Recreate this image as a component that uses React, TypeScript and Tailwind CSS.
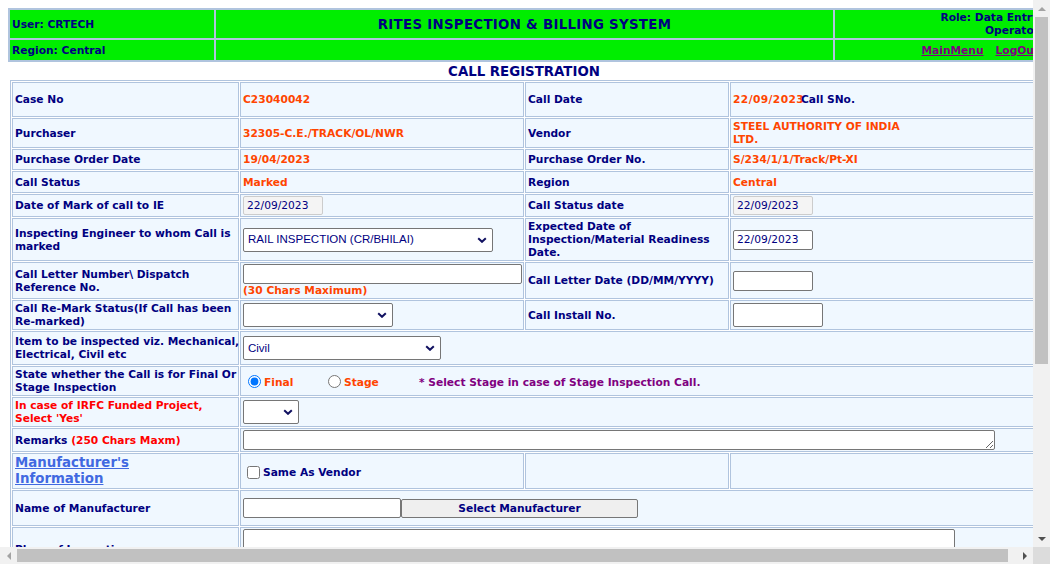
import React from 'react';

const cell = 'flex items-center border border-[#b0c4de] bg-[#f0f8ff] px-[2px]';
const box = 'rounded-[2px] border border-[#767676] bg-white px-[3px] font-normal text-[#000080] outline-none';
const roBox = 'rounded-[2px] border border-[#cccccc] bg-[#f4f4f4] px-[3px] font-normal text-[#000080] outline-none';

function Select({ className, value }: { className: string; value?: string }) {
  return (
    <div className={`relative h-[24px] ${className}`}>
      <select
        defaultValue={value ?? ''}
        className="h-full w-full appearance-none rounded-[2px] border border-[#767676] bg-white pl-[4px] font-['Liberation_Sans',Arial,sans-serif] text-[11.5px] font-normal text-[#000080] outline-none"
      >
        <option value={value ?? ''}>{value ?? ''}</option>
      </select>
      <svg className="pointer-events-none absolute right-[6px] top-[9px]" width="10" height="6" viewBox="0 0 10 6">
        <path d="M1.2 1.2L5 4.8L8.8 1.2" stroke="#101060" strokeWidth="2" fill="none" />
      </svg>
    </div>
  );
}

function Header() {
  return (
    <div className="grid w-max grid-cols-[204px_617px_206px] grid-rows-[28px_20px] gap-[2px] bg-[#b0c4de] p-[2px]">
      <div className="flex items-center bg-[#00ee00] px-[2px]">User: CRTECH</div>
      <div className="flex items-center justify-center bg-[#00ee00] text-[13.33px] tracking-[0.3px]">
        RITES INSPECTION &amp; BILLING SYSTEM
      </div>
      <div className="flex items-center justify-end bg-[#00ee00] px-[2px]">
        <div className="text-right">
          Role: Data Entry
          <br />
          Operator
        </div>
      </div>
      <div className="flex items-center bg-[#00ee00] px-[2px]">Region: Central</div>
      <div className="bg-[#00ee00]" />
      <div className="flex items-center justify-end bg-[#00ee00] px-[2px] text-[#800080]">
        <a className="underline">MainMenu</a>
        <a className="ml-[12px] underline">LogOut</a>
      </div>
    </div>
  );
}

function RegistrationForm() {
  return (
    <div className="ml-[2px] grid w-[1028px] grid-cols-[227px_284px_204px_305px] grid-rows-[35px_30px_21px_22px_23px_43px_37px_30px_34px_30px_30px_24px_36px_36px_45px] gap-[1px] border border-[#b0c4de] bg-white p-[1px] whitespace-nowrap">
      {/* case / call date */}
      <div className={cell}>Case No</div>
      <div className={`${cell} text-[#ff4500]`}>C23040042</div>
      <div className={cell}>Call Date</div>
      <div className={cell}>
        <span className="w-[68px] shrink-0 tracking-[0.4px] text-[#ff4500]">22/09/2023</span>
        <span>Call SNo.</span>
      </div>

      <div className={cell}>Purchaser</div>
      <div className={`${cell} text-[#ff4500]`}>32305-C.E./TRACK/OL/NWR</div>
      <div className={cell}>Vendor</div>
      <div className={`${cell} text-[#ff4500]`}>
        <div>
          STEEL AUTHORITY OF INDIA
          <br />
          LTD.
        </div>
      </div>

      <div className={cell}>Purchase Order Date</div>
      <div className={`${cell} text-[#ff4500]`}>19/04/2023</div>
      <div className={cell}>Purchase Order No.</div>
      <div className={`${cell} text-[#ff4500]`}>S/234/1/1/Track/Pt-XI</div>

      <div className={cell}>Call Status</div>
      <div className={`${cell} text-[#ff4500]`}>Marked</div>
      <div className={cell}>Region</div>
      <div className={`${cell} text-[#ff4500]`}>Central</div>

      <div className={cell}>Date of Mark of call to IE</div>
      <div className={cell}>
        <input readOnly value="22/09/2023" className={`h-[19px] w-[80px] ${roBox}`} />
      </div>
      <div className={cell}>Call Status date</div>
      <div className={cell}>
        <input readOnly value="22/09/2023" className={`h-[19px] w-[80px] ${roBox}`} />
      </div>

      <div className={cell}>
        <div>
          Inspecting Engineer to whom Call is
          <br />
          marked
        </div>
      </div>
      <div className={cell}>
        <Select className="w-[250px]" value="RAIL INSPECTION (CR/BHILAI)" />
      </div>
      <div className={cell}>
        <div>
          Expected Date of
          <br />
          Inspection/Material Readiness
          <br />
          Date.
        </div>
      </div>
      <div className={cell}>
        <input defaultValue="22/09/2023" className={`h-[20px] w-[80px] ${box}`} />
      </div>

      <div className={cell}>
        <div>
          {'Call Letter Number\\ Dispatch'}
          <br />
          Reference No.
        </div>
      </div>
      <div className="flex flex-col items-start border border-[#b0c4de] bg-[#f0f8ff] px-[2px] pt-[1px]">
        <input className={`h-[20px] w-[279px] ${box}`} />
        <span className="text-[#ff4500]">(30 Chars Maximum)</span>
      </div>
      <div className={cell}>Call Letter Date (DD/MM/YYYY)</div>
      <div className={cell}>
        <input className={`h-[20px] w-[80px] ${box}`} />
      </div>

      <div className={cell}>
        <div>
          Call Re-Mark Status(If Call has been
          <br />
          Re-marked)
        </div>
      </div>
      <div className={cell}>
        <Select className="w-[150px]" />
      </div>
      <div className={cell}>Call Install No.</div>
      <div className={cell}>
        <input className={`h-[24px] w-[90px] ${box}`} />
      </div>

      <div className={cell}>
        <div>
          Item to be inspected viz. Mechanical,
          <br />
          Electrical, Civil etc
        </div>
      </div>
      <div className={`${cell} col-span-3`}>
        <Select className="w-[198px]" value="Civil" />
      </div>

      <div className={cell}>
        <div>
          State whether the Call is for Final Or
          <br />
          Stage Inspection
        </div>
      </div>
      <div className={`${cell} col-span-3`}>
        <label className="flex w-[80px] items-center text-[#ff4500]">
          <input type="radio" name="calltype" defaultChecked className="ml-[5px] mr-[3px] h-[13px] w-[13px]" />
          <span className="mt-[2px]">Final</span>
        </label>
        <label className="flex w-[96px] items-center text-[#ff4500]">
          <input type="radio" name="calltype" className="ml-[5px] mr-[3px] h-[13px] w-[13px]" />
          <span className="mt-[2px]">Stage</span>
        </label>
        <span className="mt-[3px] text-[#800080]">* Select Stage in case of Stage Inspection Call.</span>
      </div>

      <div className={`${cell} text-[#ff0000]`}>
        <div>
          In case of IRFC Funded Project,
          <br />
          Select 'Yes'
        </div>
      </div>
      <div className={`${cell} col-span-3`}>
        <Select className="w-[56px]" />
      </div>

      <div className={cell}>
        Remarks&nbsp;<span className="text-[#ff0000]">(250 Chars Maxm)</span>
      </div>
      <div className={`${cell} col-span-3`}>
        <textarea className={`block h-[20px] w-[752px] ${box}`} />
      </div>

      <div className={cell}>
        <a className="text-[13.33px] leading-[16px] text-[#4169e1] underline">
          Manufacturer's
          <br />
          Information
        </a>
      </div>
      <div className={cell}>
        <label className="mt-[2px] flex items-center">
          <input type="checkbox" className="ml-[4px] mr-[3px] h-[13px] w-[13px]" />
          Same As Vendor
        </label>
      </div>
      <div className={cell} />
      <div className={cell} />

      <div className={cell}>Name of Manufacturer</div>
      <div className={`${cell} col-span-3`}>
        <input className={`h-[20px] w-[158px] ${box}`} />
        <button className="h-[19px] w-[237px] rounded-[2px] border border-[#767676] bg-[#efefef] text-[#000080]">
          Select Manufacturer
        </button>
      </div>

      <div className={cell}>Place of Inspection</div>
      <div className="col-span-3 flex items-start border border-[#b0c4de] bg-[#f0f8ff] px-[2px] pt-[1px]">
        <textarea className={`block h-[40px] w-[712px] ${box}`} />
      </div>
    </div>
  );
}

function VScroll() {
  return (
    <div className="flex h-[547px] w-[17px] flex-col bg-[#f1f1f1]">
      <div className="flex h-[17px] items-center justify-center">
        <svg width="8" height="4" viewBox="0 0 8 4">
          <path d="M4 0L8 4H0z" fill="#a3a3a3" />
        </svg>
      </div>
      <div className="flex-1 px-[2px]">
        <div className="h-[347px] bg-[#c1c1c1]" />
      </div>
      <div className="flex h-[17px] items-center justify-center">
        <svg width="8" height="4" viewBox="0 0 8 4">
          <path d="M0 0H8L4 4z" fill="#505050" />
        </svg>
      </div>
    </div>
  );
}

function HScroll() {
  return (
    <div className="flex h-[17px] w-[1033px] bg-[#f1f1f1]">
      <div className="flex w-[17px] items-center justify-center">
        <svg width="4" height="8" viewBox="0 0 4 8">
          <path d="M0 4L4 0V8z" fill="#a3a3a3" />
        </svg>
      </div>
      <div className="flex-1 py-[2px]">
        <div className="h-full w-[991px] bg-[#c1c1c1]" />
      </div>
      <div className="flex w-[17px] items-center justify-center">
        <svg width="4" height="8" viewBox="0 0 4 8">
          <path d="M0 0L4 4L0 8z" fill="#505050" />
        </svg>
      </div>
    </div>
  );
}

export default function App() {
  return (
    <div className="flex h-[564px] w-[1050px] flex-col overflow-hidden bg-white font-['DejaVu_Sans',Verdana,sans-serif] text-[10.67px] leading-[13px] font-bold text-[#000080]">
      <div className="flex h-[547px]">
        <div className="h-[547px] w-[1033px] overflow-hidden">
          <div className="w-[1048px] p-[8px]">
            <Header />
            <div className="flex h-[18px] w-[1032px] items-center justify-center text-[13.33px]">CALL REGISTRATION</div>
            <RegistrationForm />
          </div>
        </div>
        <VScroll />
      </div>
      <div className="flex h-[17px]">
        <HScroll />
        <div className="w-[17px] bg-[#dcdcdc]" />
      </div>
    </div>
  );
}
